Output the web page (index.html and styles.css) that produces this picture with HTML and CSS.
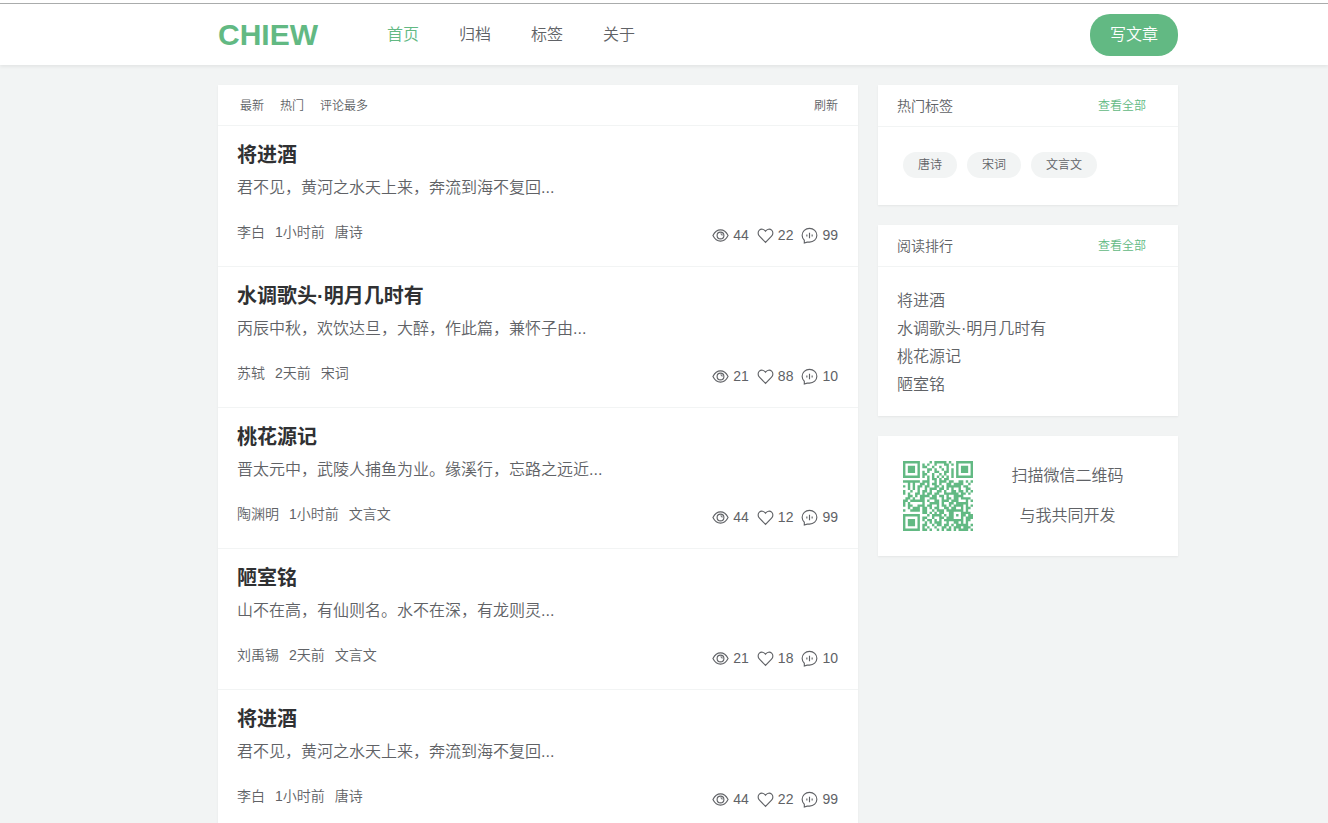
FILE: index.html
```html
<!DOCTYPE html>
<html lang="zh-CN">
<head>
<meta charset="utf-8">
<meta name="viewport" content="width=device-width, initial-scale=1">
<title>CHIEW</title>
<link rel="stylesheet" href="styles.css">
</head>
<body>
<svg class="sprite" aria-hidden="true">
  <symbol id="eye" viewBox="0 0 18 18"><path d="M1 9C3 5 6 3 9 3s6 2 8 6c-2 4-5 6-8 6s-6-2-8-6z"/><circle cx="9" cy="9" r="3.6"/><path d="M9 7.200c1 0 1.800.8 1.800 1.800"/></symbol>
  <symbol id="heart" viewBox="0 0 18 18"><path d="M9 16.300 2.600 9.700C.7 7.700.8 4.800 2.500 3.300 4.400 1.600 7.200 2 9 4.500c1.800-2.500 4.600-2.900 6.500-1.200 1.700 1.500 1.800 4.400-.1 6.400z"/></symbol>
  <symbol id="comment" viewBox="0 0 18 18"><path d="M3.500 17V14C2 12.700 1.200 11 1.200 8.800 1.200 4.700 4.700 1.500 9 1.500s7.800 3.200 7.800 7.300S13.300 16 9 16H6.500z"/><path d="M6.200 8v2M9 6v6M11.800 8v2"/></symbol>
</svg>
<header class="header">
  <div class="container header-inner">
    <a class="logo" href="#">CHIEW</a>
    <nav class="nav">
      <a class="active" href="#">首页</a>
      <a href="#">归档</a>
      <a href="#">标签</a>
      <a href="#">关于</a>
    </nav>
    <button class="write" type="button">写文章</button>
  </div>
</header>
<div class="page">
<div class="container layout">
  <main class="posts">
    <div class="tabs">
      <a href="#">最新</a>
      <a href="#">热门</a>
      <a href="#">评论最多</a>
      <button class="refresh" type="button">刷新</button>
    </div>
    <article class="post">
      <h2>将进酒</h2>
      <p class="summary">君不见，黄河之水天上来，奔流到海不复回...</p>
      <div class="info">
        <div class="meta"><span>李白</span><span>1小时前</span><span>唐诗</span></div>
        <div class="stats"><span><svg><use href="#eye"/></svg>44</span><span><svg><use href="#heart"/></svg>22</span><span><svg><use href="#comment"/></svg>99</span></div>
      </div>
    </article>
    <article class="post">
      <h2>水调歌头·明月几时有</h2>
      <p class="summary">丙辰中秋，欢饮达旦，大醉，作此篇，兼怀子由...</p>
      <div class="info">
        <div class="meta"><span>苏轼</span><span>2天前</span><span>宋词</span></div>
        <div class="stats"><span><svg><use href="#eye"/></svg>21</span><span><svg><use href="#heart"/></svg>88</span><span><svg><use href="#comment"/></svg>10</span></div>
      </div>
    </article>
    <article class="post">
      <h2>桃花源记</h2>
      <p class="summary">晋太元中，武陵人捕鱼为业。缘溪行，忘路之远近...</p>
      <div class="info">
        <div class="meta"><span>陶渊明</span><span>1小时前</span><span>文言文</span></div>
        <div class="stats"><span><svg><use href="#eye"/></svg>44</span><span><svg><use href="#heart"/></svg>12</span><span><svg><use href="#comment"/></svg>99</span></div>
      </div>
    </article>
    <article class="post">
      <h2>陋室铭</h2>
      <p class="summary">山不在高，有仙则名。水不在深，有龙则灵...</p>
      <div class="info">
        <div class="meta"><span>刘禹锡</span><span>2天前</span><span>文言文</span></div>
        <div class="stats"><span><svg><use href="#eye"/></svg>21</span><span><svg><use href="#heart"/></svg>18</span><span><svg><use href="#comment"/></svg>10</span></div>
      </div>
    </article>
    <article class="post">
      <h2>将进酒</h2>
      <p class="summary">君不见，黄河之水天上来，奔流到海不复回...</p>
      <div class="info">
        <div class="meta"><span>李白</span><span>1小时前</span><span>唐诗</span></div>
        <div class="stats"><span><svg><use href="#eye"/></svg>44</span><span><svg><use href="#heart"/></svg>22</span><span><svg><use href="#comment"/></svg>99</span></div>
      </div>
    </article>
  </main>
  <aside class="sidebar">
    <section class="card">
      <div class="card-head"><h3>热门标签</h3><a href="#">查看全部</a></div>
      <div class="tags"><a href="#">唐诗</a><a href="#">宋词</a><a href="#">文言文</a></div>
    </section>
    <section class="card">
      <div class="card-head"><h3>阅读排行</h3><a href="#">查看全部</a></div>
      <ul class="rank">
        <li><a href="#">将进酒</a></li>
        <li><a href="#">水调歌头·明月几时有</a></li>
        <li><a href="#">桃花源记</a></li>
        <li><a href="#">陋室铭</a></li>
      </ul>
    </section>
    <section class="card wechat">
      <svg class="qr" viewBox="0 0 29 29" role="img" aria-label="微信二维码"><path id="qr"/></svg>
      <p>扫描微信二维码<br>与我共同开发</p>
    </section>
  </aside>
</div>
</div>
<script src="qr.js"></script>
</body>
</html>
```
FILE: styles.css
```css
* { box-sizing: border-box; }
html { scrollbar-width: none; }
body {
  margin: 0;
  padding-top: 3px;
  background: linear-gradient(#fff 3px, #f2f4f4 3px);
  color: #606266;
  font: 350 16px/20px "Liberation Sans", "Noto Sans CJK SC", sans-serif;
}
h2, h3, p, ul { margin: 0; padding: 0; }
a { color: inherit; text-decoration: none; }
button { border: 0; font: inherit; cursor: pointer; }
.sprite { position: absolute; width: 0; height: 0; }
.container { max-width: 960px; margin: 0 auto; }
.header, .page { padding-left: 68px; }
.header {
  border-top: 1px solid #aaacac;
  background: #fff;
  box-shadow: 0 2px 3px rgba(0, 0, 0, .06);
}
.header-inner { display: flex; align-items: center; height: 61px; }
.logo { color: #62b983; font-size: 30px; font-weight: 700; line-height: 36px; }
.nav { display: flex; gap: 40px; margin-left: 69px; }
.nav .active { color: #62b983; }
.write {
  height: 42px;
  margin-left: auto;
  padding: 0 20px;
  border-radius: 20px;
  background: #62b983;
  color: #fff;
}
.layout {
  display: grid;
  grid-template-columns: minmax(0, 640fr) minmax(0, 300fr);
  gap: 20px;
  align-items: start;
  padding: 20px 0;
}
.posts, .card { background: #fff; box-shadow: 0 1px 2px rgba(0, 0, 0, .06); }
.tabs {
  display: flex;
  align-items: center;
  gap: 16px;
  height: 41px;
  padding: 1px 20px 0 22px;
  border-bottom: 1px solid #f2f4f4;
  font-size: 12px;
}
.refresh { margin-left: auto; padding: 0; background: none; color: inherit; }
.post { padding: 14px 20px 20px 19px; border-bottom: 1px solid #f2f4f4; }
.post h2 { color: #303133; font-size: 20px; font-weight: 700; line-height: 30px; }
.summary { margin-top: 6px; line-height: 24px; }
.info { display: flex; justify-content: space-between; margin-top: 20px; font-size: 14px; line-height: 24px; }
.meta { display: flex; gap: 10px; }
.stats { display: flex; gap: 8px; padding-top: 4px; line-height: 22px; }
.stats span { display: flex; align-items: center; gap: 4px; }
.stats svg { width: 17px; height: 17px; fill: none; stroke: #606266; stroke-width: 1.2; }
.sidebar { display: grid; gap: 20px; }
.card-head {
  display: flex;
  align-items: center;
  justify-content: space-between;
  height: 42px;
  padding: 0 32px 0 19px;
  border-bottom: 1px solid #f2f4f4;
}
.card-head h3 { font-size: 14px; font-weight: 350; }
.card-head a { color: #62b983; font-size: 12px; }
.tags { display: flex; flex-wrap: wrap; gap: 10px; padding: 25px 25px 27px; }
.tags a { padding: 0 15px; border-radius: 13px; background: #f2f4f4; font-size: 12px; line-height: 26px; }
.rank { padding: 20px 19px 17px; list-style: none; line-height: 28px; }
.wechat { display: flex; align-items: center; gap: 20px; padding: 20px 36px 20px 25px; }
.qr { flex: none; width: 70px; height: 70px; fill: #62b983; }
.wechat p { flex: 1; line-height: 40px; text-align: center; }
```
FILE: qr.js
```js
// One string per row of the code; "#" is a filled module.
const rows = [
  "#######....#.#####.#..#######",
  "#.....#.#.#..#...##.#.#.....#",
  "#.###.#.##..#..#..#...#.###.#",
  "#.###.#...##.#..#.#.#.#.###.#",
  "#.###.#.#.#..##..##.#.#.###.#",
  "#.....#.##..#..#.#..#.#.....#",
  "#######.#.#.#.#.#.#.#.#######",
  "..........#.##.#.##..........",
  "#######.###..#.###.##..##.#.#",
  "..#.#..##.#.##.#..##.####..#.",
  "#.#.#.##.##..##.#.######.##..",
  "..#.#.#..#.###.##.#.#..#..##.",
  "#..#..#.##.#..##.#..##.##.#.#",
  "#.#..##.#.##.##..######.##.#.",
  "..##.#.####.##.##.#..####....",
  ".##.#..##..###..#.##.##.####.",
  "##.######.#..##.###.###...#.#",
  "#.#.....#..####.#..##.#####..",
  "#.##..###.##..#.##.#.####.#.#",
  "..#.###.##.#.##..##.##..#.##.",
  "#..####.##..#.###.#######.#..",
  "........##.#.#.##..##...####.",
  "#######...#.####.#.##.#.##.##",
  "#.....#.##..#..##.###...#.###",
  "#.###.#.#.##.#.#.########.##.",
  "#.###.#..#.#.###..#..##.#.#..",
  "#.###.#.##..#.##.##.#.#####.#",
  "#.....#.#.#..#..##.#.###.###.",
  "#######.##.#..#.#.##.#.####.#"
];
document.getElementById("qr").setAttribute("d", rows.map((row, y) =>
  [...row.matchAll(/#+/g)].map(m => `M${m.index} ${y}h${m[0].length}v1h-${m[0].length}z`).join("")
).join(""));
```
